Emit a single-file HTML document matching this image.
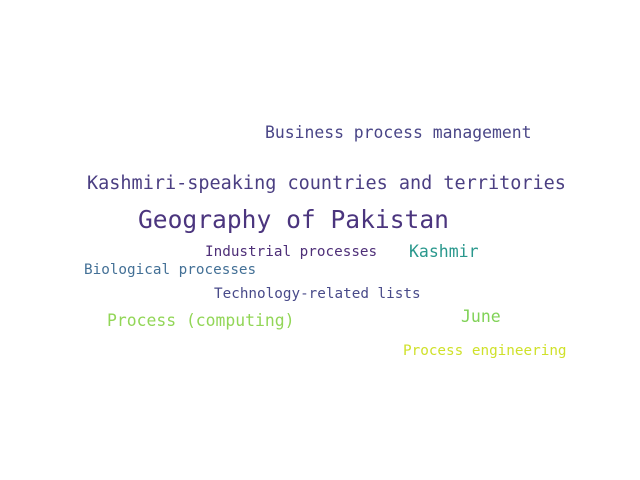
<!DOCTYPE html>
<html><head><meta charset="utf-8"><style>
html,body{margin:0;padding:0;background:#fff;}
body{width:640px;height:480px;position:relative;overflow:hidden;font-family:"DejaVu Sans Mono","Liberation Mono",monospace;}
span{position:absolute;white-space:nowrap;line-height:1;}
</style></head><body>
<span style="left:265px;top:125px;font-size:16.4px;color:#4a4687">Business process management</span>
<span style="left:87px;top:175px;font-size:18.5px;color:#4b3f82">Kashmiri-speaking countries and territories</span>
<span style="left:138px;top:208px;font-size:24.6px;color:#4b357e">Geography of Pakistan</span>
<span style="left:205px;top:245px;font-size:14.3px;color:#4e2f78">Industrial processes</span>
<span style="left:409px;top:244px;font-size:16.5px;color:#2a988d">Kashmir</span>
<span style="left:84px;top:263px;font-size:14.3px;color:#437096">Biological processes</span>
<span style="left:214px;top:287px;font-size:14.3px;color:#484a89">Technology-related lists</span>
<span style="left:107px;top:313px;font-size:16.4px;color:#92d657">Process (computing)</span>
<span style="left:461px;top:309px;font-size:16.5px;color:#80d257">June</span>
<span style="left:403px;top:344px;font-size:14.3px;color:#cfe12a">Process engineering</span>
</body></html>
